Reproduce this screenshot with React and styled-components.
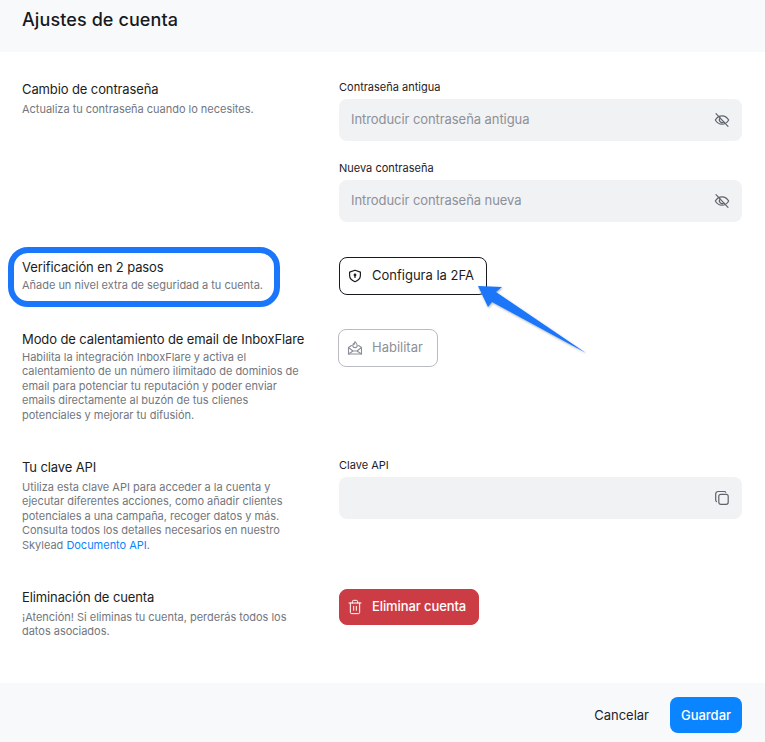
import React from "react";
import styled, { createGlobalStyle } from "styled-components";
import { Trash2 } from "lucide-react";

const Global = createGlobalStyle`
  html, body { margin: 0; padding: 0; background: #fff; }
  body { font-family: Inter, "Noto Sans", sans-serif; }
`;

const Page = styled.div`
  position: relative;
  width: 765px;
  height: 742px;
  overflow: hidden;
  display: flex;
  flex-direction: column;
  background: #fff;
`;

const Header = styled.header`
  height: 52px;
  background: #f8f9fb;
  padding: 0 22px;
`;

const Title = styled.h1`
  margin: 0;
  font-size: 18px;
  line-height: 40px;
  font-weight: 500;
  letter-spacing: 0.1px;
  color: #17191f;
`;

const Sections = styled.div`
  flex: 1;
  padding: 28px 23px 0 22px;
  display: flex;
  flex-direction: column;
  gap: 36px;
`;

const Row = styled.section`
  display: grid;
  grid-template-columns: 277px 403px;
  column-gap: 40px;
`;

const Info = styled.div`
  display: flex;
  flex-direction: column;
  gap: ${(p) => p.$gap}px;
`;

const Name = styled.h2`
  margin: 0;
  font-size: 13px;
  line-height: 18px;
  font-weight: 400;
  letter-spacing: -0.11px;
  color: #1b1d22;
  white-space: nowrap;
`;

const Desc = styled.p`
  margin: 0;
  font-size: 11px;
  line-height: 14.4px;
  letter-spacing: -0.02px;
  color: #72767e;
  white-space: nowrap;
`;

const DocLink = styled.a`
  color: #0a84ff;
  text-decoration: none;
`;

const Fields = styled.div`
  display: flex;
  flex-direction: column;
  gap: 20px;
`;

const Field = styled.div`
  display: flex;
  flex-direction: column;
  gap: 5px;
`;

const Label = styled.label`
  font-size: 11px;
  line-height: 14px;
  color: #1f2126;
`;

const InputBox = styled.div`
  height: 42px;
  border-radius: 8px;
  background: #f1f2f4;
  display: flex;
  align-items: center;
  justify-content: space-between;
  padding: 0 12px;
  font-size: 13px;
  letter-spacing: -0.07px;
  color: #8d9098;
`;

const RaisedText = styled.span`
  margin-bottom: 2px;
`;

const Button = styled.button`
  display: inline-flex;
  align-items: center;
  gap: ${(p) => p.$gap}px;
  box-sizing: border-box;
  width: ${(p) => p.$w}px;
  height: ${(p) => p.$h}px;
  margin: ${(p) => p.$m};
  padding: 0 0 0 ${(p) => p.$pl}px;
  border-radius: 8px;
  font: inherit;
  font-size: 13px;
  font-weight: ${(p) => (p.$variant === "danger" ? 500 : 400)};
  letter-spacing: ${(p) => (p.$variant === "danger" ? "-0.1px" : "0")};
  justify-self: start;
  color: ${(p) =>
    ({ outline: "#1b1d22", muted: "#8d9098", danger: "#fff" }[p.$variant])};
  background: ${(p) => (p.$variant === "danger" ? "#cc3c45" : "#fff")};
  border: 1px solid
    ${(p) =>
      ({ outline: "#17191f", muted: "#b9bcc2", danger: "#cc3c45" }[p.$variant])};
`;

const Footer = styled.footer`
  box-sizing: border-box;
  height: 59px;
  background: #f8f9fb;
  display: flex;
  align-items: center;
  justify-content: flex-end;
  gap: 21px;
  padding: 5px 23px 0;
`;

const Cancel = styled.button`
  border: 0;
  background: none;
  padding: 0;
  font: inherit;
  font-size: 13px;
  color: #22242a;
`;

const Save = styled.button`
  width: 72px;
  height: 36px;
  border: 0;
  border-radius: 8px;
  background: #0a84ff;
  color: #fff;
  font: inherit;
  font-size: 13px;
  font-weight: 500;
`;

const Highlight = styled.div`
  position: absolute;
  left: 8px;
  top: 247px;
  width: 272px;
  height: 60px;
  box-sizing: border-box;
  border: 6px solid #1a76fa;
  border-radius: 20px;
  pointer-events: none;
`;

const Arrow = styled.svg`
  position: absolute;
  left: 470px;
  top: 278px;
  width: 125px;
  height: 85px;
  pointer-events: none;
`;

const EyeOff = () => (
  <svg width="16" height="16" viewBox="0 0 16 16" fill="none" stroke="#5f636b" strokeWidth="1.2" strokeLinecap="round" strokeLinejoin="round">
    <path d="M1.3 8C3 5.2 5.3 3.8 8 3.8S13 5.2 14.7 8C13 10.8 10.7 12.2 8 12.2S3 10.8 1.3 8Z" />
    <path d="M6.2 6.2a2.5 2.5 0 0 0 3.6 3.6" />
    <path d="M2 1.6l12 12.8" />
  </svg>
);

const ShieldKey = () => (
  <svg width="14" height="14" viewBox="0 0 14 14" fill="none" stroke="#1b1d22" strokeWidth="1.2" strokeLinejoin="round">
    <path d="M7 1.2l5.4 1.9v3.5c0 3-2.2 5-5.4 6.2-3.2-1.2-5.4-3.2-5.4-6.2V3.1Z" />
    <circle cx="7" cy="6" r="0.8" fill="#1b1d22" />
    <path d="M7 6.5v2" strokeLinecap="round" />
  </svg>
);

const MailFlame = () => (
  <svg width="16" height="16" viewBox="0 0 16 16" fill="none" stroke="#8d9098" strokeWidth="1.1" strokeLinejoin="round" strokeLinecap="round">
    <path d="M1.5 7.5V14h13V7.5L11.5 5.5M4.5 5.5L1.5 7.5" />
    <path d="M1.5 7.5L6 11l-4.5 3M14.5 7.5L10 11l4.5 3M6 11h4" />
    <path d="M8 1.5c.3 1.3 2.2 2 2.2 3.9a2.2 2.2 0 0 1-4.4 0c0-.8.4-1.4.9-1.9.2.5.4.7.7.8-.1-1 0-2 .6-2.8Z" />
  </svg>
);

const Copy = () => (
  <svg width="16" height="16" viewBox="0 0 16 16" fill="none" stroke="#5f636b" strokeWidth="1.2" strokeLinecap="round" strokeLinejoin="round">
    <rect x="4.8" y="4.3" width="9.4" height="10" rx="2" />
    <path d="M11.8 2.3c-.3-.5-.8-.8-1.4-.8H4.2c-1.5 0-2.5 1-2.5 2.5v6.2c0 .6.3 1.1.8 1.4" />
  </svg>
);

export default function App() {
  return (
    <Page>
      <Global />
      <Header>
        <Title>Ajustes de cuenta</Title>
      </Header>
      <Sections>
        <Row>
          <Info $gap={4}>
            <Name>Cambio de contraseña</Name>
            <Desc>Actualiza tu contraseña cuando lo necesites.</Desc>
          </Info>
          <Fields>
            <Field>
              <Label>Contraseña antigua</Label>
              <InputBox>
                <RaisedText>Introducir contraseña antigua</RaisedText>
                <EyeOff />
              </InputBox>
            </Field>
            <Field>
              <Label>Nueva contraseña</Label>
              <InputBox>
                <RaisedText>Introducir contraseña nueva</RaisedText>
                <EyeOff />
              </InputBox>
            </Field>
          </Fields>
        </Row>
        <Row>
          <Info $gap={2}>
            <Name>Verificación en 2 pasos</Name>
            <Desc>Añade un nivel extra de seguridad a tu cuenta.</Desc>
          </Info>
          <Button $variant="outline" $w={148} $h={38} $m="-1px 0" $pl={8} $gap={10}>
            <ShieldKey />
            <RaisedText>Configura la 2FA</RaisedText>
          </Button>
        </Row>
        <Row>
          <Info $gap={2}>
            <Name>Modo de calentamiento de email de InboxFlare</Name>
            <Desc>
              Habilita la integración InboxFlare y activa el<br />
              calentamiento de un número ilimitado de dominios de<br />
              email para potenciar tu reputación y poder enviar<br />
              emails directamente al buzón de tus clienes<br />
              potenciales y mejorar tu difusión.
            </Desc>
          </Info>
          <Button $variant="muted" $w={100} $h={38} $m="-1px 0 0 -1px" $pl={8} $gap={9}>
            <MailFlame />
            <RaisedText>Habilitar</RaisedText>
          </Button>
        </Row>
        <Row>
          <Info $gap={4}>
            <Name>Tu clave API</Name>
            <Desc>
              Utiliza esta clave API para acceder a la cuenta y<br />
              ejecutar diferentes acciones, como añadir clientes<br />
              potenciales a una campaña, recoger datos y más.<br />
              Consulta todos los detalles necesarios en nuestro<br />
              Skylead <DocLink href="#">Documento API</DocLink>.
            </Desc>
          </Info>
          <Field>
            <Label>Clave API</Label>
            <InputBox>
              <span />
              <Copy />
            </InputBox>
          </Field>
        </Row>
        <Row>
          <Info $gap={4}>
            <Name>Eliminación de cuenta</Name>
            <Desc>
              ¡Atención! Si eliminas tu cuenta, perderás todos los<br />
              datos asociados.
            </Desc>
          </Info>
          <Button $variant="danger" $w={140} $h={36} $m="1px 0 0" $pl={7} $gap={9}>
            <Trash2 size={16} strokeWidth={1.5} />
            <RaisedText>Eliminar cuenta</RaisedText>
          </Button>
        </Row>
      </Sections>
      <Footer>
        <Cancel>Cancelar</Cancel>
        <Save>Guardar</Save>
      </Footer>
      <Highlight />
      <Arrow viewBox="0 0 125 85">
        <defs>
          <filter id="arrowShadow" x="-20%" y="-20%" width="140%" height="140%">
            <feDropShadow dx="0.6" dy="1" stdDeviation="1" floodColor="#000" floodOpacity="0.35" />
          </filter>
        </defs>
        <polygon points="8,8 32,9 26,14 116,75 22,24 18,29" fill="#1a76fa" filter="url(#arrowShadow)" />
      </Arrow>
    </Page>
  );
}
